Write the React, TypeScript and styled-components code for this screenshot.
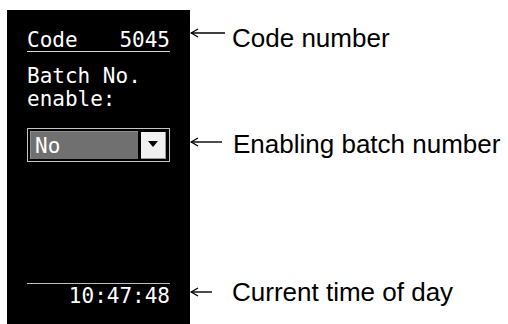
import styled, { createGlobalStyle } from 'styled-components'

const GlobalStyle = createGlobalStyle`
  html, body {
    margin: 0;
    padding: 0;
    background: #ffffff;
  }
  #root {
    height: 324px;
  }
`

const callouts = [
  { label: 'Code number', arrow: 35, arrowTop: 10, gap: 7, top: 23 },
  { label: 'Enabling batch number', arrow: 32, arrowTop: 13, gap: 11, top: 76 },
  { label: 'Current time of day', arrow: 22, arrowTop: 15, gap: 20, top: 118 },
]

function Arrow({ length }: { length: number }) {
  return (
    <svg width={length} height={10} viewBox={`0 0 ${length} 10`}>
      <line x1={1} y1={5} x2={length} y2={5} stroke="#000" strokeWidth={1.4} />
      <polyline points="8,1 1.2,5 8,9" fill="none" stroke="#000" strokeWidth={1.4} />
    </svg>
  )
}

function App() {
  return (
    <>
      <GlobalStyle />
      <Page>
        <Screen>
          <TitleRow>
            <span>Code</span>
            <span>5045</span>
          </TitleRow>
          <Label>
            Batch No.
            <br />
            enable:
          </Label>
          <Select>
            <Field>No</Field>
            <DropButton>
              <Triangle />
            </DropButton>
          </Select>
          <Footer>10:47:48</Footer>
        </Screen>
        <Notes>
          {callouts.map((c) => (
            <Callout key={c.label} top={c.top}>
              <ArrowSlot offset={c.arrowTop}>
                <Arrow length={c.arrow} />
              </ArrowSlot>
              <NoteText gap={c.gap}>{c.label}</NoteText>
            </Callout>
          ))}
        </Notes>
      </Page>
    </>
  )
}

const Page = styled.div`
  display: flex;
  height: 324px;
  padding-left: 7px;
  box-sizing: border-box;
`

const Screen = styled.div`
  display: flex;
  flex-direction: column;
  width: 183px;
  margin-top: 10px;
  padding: 19px 20px 16px 20px;
  box-sizing: border-box;
  background: #000000;
  color: #ffffff;
  font-family: "DejaVu Sans Mono", "Liberation Mono", monospace;
  font-size: 21px;
  line-height: 22px;
`

const TitleRow = styled.div`
  display: flex;
  justify-content: space-between;
  border-bottom: 1px solid #d6d6d6;
`

const Label = styled.div`
  margin-top: 13px;
  line-height: 23px;
`

const Select = styled.div`
  display: flex;
  align-items: center;
  margin-top: 17px;
  height: 34px;
  padding: 2px 3px 2px 2px;
  box-sizing: border-box;
  border: 1px solid #c4c4c4;
`

const Field = styled.div`
  flex: 1;
  align-self: stretch;
  display: flex;
  align-items: center;
  padding-left: 4px;
  background: #707070;
  border-top: 1px solid #8e8e8e;
  border-left: 1px solid #8e8e8e;
`

const DropButton = styled.div`
  display: flex;
  align-items: center;
  justify-content: center;
  width: 25px;
  height: 27px;
  margin-left: 3px;
  box-sizing: border-box;
  background: #f0f0f0;
  border-right: 1px solid #9a9a9a;
  border-bottom: 1px solid #9a9a9a;
`

const Triangle = styled.div`
  width: 0;
  height: 0;
  border-left: 5px solid transparent;
  border-right: 5px solid transparent;
  border-top: 6px solid #000000;
  margin-top: -1px;
`

const Footer = styled.div`
  margin-top: auto;
  padding-top: 1px;
  border-top: 1px solid #bdbdbd;
  text-align: right;
  line-height: 23px;
`

const Notes = styled.div`
  display: flex;
  flex-direction: column;
`

const Callout = styled.div<{ top: number }>`
  display: flex;
  align-items: flex-start;
  margin-top: ${({ top }) => top}px;
`

const ArrowSlot = styled.div<{ offset: number }>`
  display: flex;
  margin-top: ${({ offset }) => offset - 5}px;
`

const NoteText = styled.div<{ gap: number }>`
  margin-left: ${({ gap }) => gap}px;
  font-family: "Liberation Sans", Arial, sans-serif;
  font-size: 26px;
  line-height: 30px;
  color: #000000;
  white-space: nowrap;
`

export default App
